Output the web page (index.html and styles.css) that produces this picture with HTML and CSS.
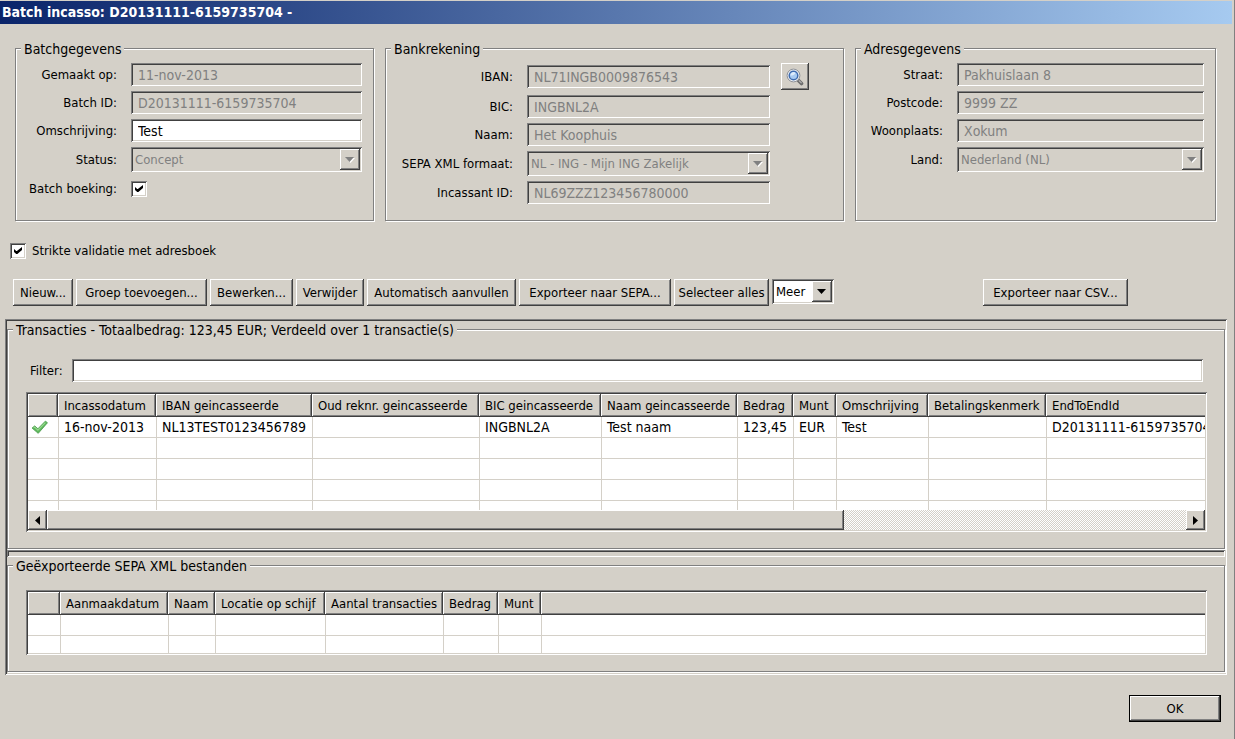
FILE: index.html
```html
<!DOCTYPE html>
<html lang="nl">
<head>
<meta charset="utf-8">
<title>Batch incasso</title>
<link rel="stylesheet" href="styles.css">
</head>
<body>
<div class="window">
  <h1 class="titlebar">Batch incasso: D20131111-6159735704 -</h1>
  <main class="content">
    <div class="groups">
      <fieldset class="group">
        <legend>Batchgegevens</legend>
        <div class="form form-batch">
          <label for="made">Gemaakt op:</label>
          <input class="field" id="made" type="text" value="11-nov-2013" disabled>
          <label for="batchid">Batch ID:</label>
          <input class="field" id="batchid" type="text" value="D20131111-6159735704" disabled>
          <label for="descr">Omschrijving:</label>
          <input class="field" id="descr" type="text" value="Test">
          <label for="status">Status:</label>
          <span class="combo"><select id="status" disabled><option>Concept</option></select><span class="drop"><svg viewBox="0 0 10 6"><path class="arrow-light" d="M1 1h9L5.500 6z"/><path d="M0 0h9L4.500 5z"/></svg></span></span>
          <label for="booking">Batch boeking:</label>
          <input class="check" id="booking" type="checkbox" checked>
        </div>
      </fieldset>
      <fieldset class="group">
        <legend>Bankrekening</legend>
        <div class="form form-bank">
          <label for="iban">IBAN:</label>
          <input class="field" id="iban" type="text" value="NL71INGB0009876543" disabled>
          <button class="button icon-button" type="button" aria-label="Zoeken">
            <svg viewBox="0 0 18 18"><path d="M12 12l3.500 3.500" stroke="#6c6c6c" stroke-width="3.600" stroke-linecap="round"/><path d="M12.800 12.300l2.800 2.800" stroke="#b4b4b4" stroke-width="1.200"/><circle cx="7.500" cy="7.500" r="6.400" fill="#f2f3f4" stroke="#8e9299" stroke-width="1"/><circle cx="7.500" cy="7.500" r="4.300" fill="#a9cbf2" stroke="#3f6cb0" stroke-width="1.500"/><path d="M4.500 7.500a3 3 0 0 1 5-2.600C8.500 7 6.500 7.600 4.500 7.500z" fill="#deecfc"/></svg>
          </button>
          <label for="bic">BIC:</label>
          <input class="field" id="bic" type="text" value="INGBNL2A" disabled>
          <label for="name">Naam:</label>
          <input class="field" id="name" type="text" value="Het Koophuis" disabled>
          <label for="format">SEPA XML formaat:</label>
          <span class="combo"><select id="format" disabled><option>NL - ING - Mijn ING Zakelijk</option></select><span class="drop"><svg viewBox="0 0 10 6"><path class="arrow-light" d="M1 1h9L5.500 6z"/><path d="M0 0h9L4.500 5z"/></svg></span></span>
          <label for="creditor">Incassant ID:</label>
          <input class="field" id="creditor" type="text" value="NL69ZZZ123456780000" disabled>
        </div>
      </fieldset>
      <fieldset class="group">
        <legend>Adresgegevens</legend>
        <div class="form form-address">
          <label for="street">Straat:</label>
          <input class="field" id="street" type="text" value="Pakhuislaan 8" disabled>
          <label for="zip">Postcode:</label>
          <input class="field" id="zip" type="text" value="9999 ZZ" disabled>
          <label for="city">Woonplaats:</label>
          <input class="field" id="city" type="text" value="Xokum" disabled>
          <label for="country">Land:</label>
          <span class="combo"><select id="country" disabled><option>Nederland (NL)</option></select><span class="drop"><svg viewBox="0 0 10 6"><path class="arrow-light" d="M1 1h9L5.500 6z"/><path d="M0 0h9L4.500 5z"/></svg></span></span>
        </div>
      </fieldset>
    </div>

    <div class="strict">
      <input class="check" id="strict" type="checkbox" checked>
      <label for="strict">Strikte validatie met adresboek</label>
    </div>

    <div class="toolbar">
      <button class="button" type="button">Nieuw...</button>
      <button class="button" type="button">Groep toevoegen...</button>
      <button class="button" type="button">Bewerken...</button>
      <button class="button" type="button">Verwijder</button>
      <button class="button" type="button">Automatisch aanvullen</button>
      <button class="button" type="button">Exporteer naar SEPA...</button>
      <button class="button" type="button">Selecteer alles</button>
      <span class="combo"><select aria-label="Meer"><option>Meer</option></select><span class="drop"><svg viewBox="0 0 10 6"><path d="M0 0h9L4.500 5z"/></svg></span></span>
      <button class="button export-csv" type="button">Exporteer naar CSV...</button>
    </div>

    <div class="panes">
      <fieldset class="group pane pane-transactions">
        <legend>Transacties - Totaalbedrag: 123,45 EUR; Verdeeld over 1 transactie(s)</legend>
        <div class="filter">
          <label for="filter">Filter:</label>
          <input class="field" id="filter" type="text">
        </div>
        <div class="grid-box">
          <div class="viewport">
            <table>
              <colgroup><col class="w30"><col class="w98"><col class="w156"><col class="w167"><col class="w122"><col class="w136"><col class="w56"><col class="w43"><col class="w92"><col class="w118"><col></colgroup>
              <thead>
                <tr><th></th><th>Incassodatum</th><th>IBAN geincasseerde</th><th>Oud reknr. geincasseerde</th><th>BIC geincasseerde</th><th>Naam geincasseerde</th><th>Bedrag</th><th>Munt</th><th>Omschrijving</th><th>Betalingskenmerk</th><th>EndToEndId</th></tr>
              </thead>
              <tbody>
                <tr><td class="state"><svg viewBox="0 0 16 16" role="img" aria-label="Geldig"><path d="M1 8.500L3.500 6.500l3 2.700L13.500 2l2 1.500L6.800 13.500z" fill="#5cb85a" stroke="#4a9c4c" stroke-width=".8" stroke-linejoin="round"/><path d="M2.500 8.300l1-.7 3 2.900L13.500 3.500" fill="none" stroke="#98d890" stroke-width="1"/></svg></td><td>16-nov-2013</td><td>NL13TEST0123456789</td><td></td><td>INGBNL2A</td><td>Test naam</td><td>123,45</td><td>EUR</td><td>Test</td><td></td><td>D20131111-6159735704</td></tr>
                <tr><td></td><td></td><td></td><td></td><td></td><td></td><td></td><td></td><td></td><td></td><td></td></tr>
                <tr><td></td><td></td><td></td><td></td><td></td><td></td><td></td><td></td><td></td><td></td><td></td></tr>
                <tr><td></td><td></td><td></td><td></td><td></td><td></td><td></td><td></td><td></td><td></td><td></td></tr>
                <tr><td></td><td></td><td></td><td></td><td></td><td></td><td></td><td></td><td></td><td></td><td></td></tr>
              </tbody>
            </table>
          </div>
          <div class="scrollbar">
            <button class="scroll-button" type="button" aria-label="Naar links"><svg viewBox="0 0 5 9"><path d="M5 0v9L0 4.500z"/></svg></button>
            <div class="track"><div class="thumb"></div></div>
            <button class="scroll-button" type="button" aria-label="Naar rechts"><svg viewBox="0 0 5 9"><path d="M0 0v9l5-4.500z"/></svg></button>
          </div>
        </div>
      </fieldset>
      <div class="sash"></div>
      <fieldset class="group pane pane-exports">
        <legend>Geëxporteerde SEPA XML bestanden</legend>
        <div class="grid-box">
          <div class="viewport viewport-short">
            <table>
              <colgroup><col class="w32"><col class="w108"><col class="w47"><col class="w110"><col class="w118"><col class="w55"><col class="w43"><col></colgroup>
              <thead>
                <tr><th></th><th>Aanmaakdatum</th><th>Naam</th><th>Locatie op schijf</th><th>Aantal transacties</th><th>Bedrag</th><th>Munt</th><th></th></tr>
              </thead>
              <tbody>
                <tr><td></td><td></td><td></td><td></td><td></td><td></td><td></td><td></td></tr>
                <tr><td></td><td></td><td></td><td></td><td></td><td></td><td></td><td></td></tr>
              </tbody>
            </table>
          </div>
        </div>
      </fieldset>
    </div>

    <div class="actions">
      <button class="button ok" type="button">OK</button>
    </div>
  </main>
</div>
</body>
</html>
```
FILE: styles.css
```css
:root {
  --face: #d4d0c8;
  --shade: #808080;
  --dark: #404040;
  --sunken: inset 1px 1px #808080, inset -1px -1px #fff, inset 2px 2px #404040, inset -2px -2px #d4d0c8;
  --raised: inset -1px -1px #404040, inset 1px 1px #fff, inset -2px -2px #808080;
}

* { box-sizing: border-box; }

body {
  margin: 0;
  background: var(--face);
  color: #000;
  font: 13px/17px "DejaVu Sans Condensed", "DejaVu Sans", sans-serif;
}

input, select, button { font: inherit; color: inherit; }

.window {
  min-height: 100vh;
  padding: 1px 1px 0 0;
  border-right: 1px solid var(--shade);
}

.titlebar {
  margin: 0 1px 0 0;
  padding: 3px 2px;
  background: linear-gradient(90deg, #0a246a, #a6caf0);
  color: #fff;
  font-size: 14px;
  line-height: 17px;
  font-weight: bold;
}

.content { padding: 16px 6px 17px 5px; }

.groups {
  display: grid;
  grid-template-columns: 359fr 459fr 361fr;
  gap: 11px;
  padding: 0 11px 0 10px;
}

.group {
  min-width: 0;
  margin: 0;
  padding: 6px 11px 16px 5px;
  border: 1px solid var(--shade);
  box-shadow: inset 1px 1px #fff, 1px 1px #fff;
}

legend {
  padding: 2px 3px 0;
  background: var(--face);
  font-size: 14px;
  line-height: 15px;
}

.form {
  display: grid;
  gap: 5px 14px;
  grid-auto-rows: minmax(23px, auto);
  align-items: center;
}
.form label { text-align: right; white-space: nowrap; }
.form-batch { grid-template-columns: 96px 1fr; }
.form-bank { grid-template-columns: 122px 1fr 48px; }
.form-bank label { grid-column: 1; }
.form-address { grid-template-columns: 82px 1fr; }

.field {
  width: 100%;
  height: 23px;
  min-width: 0;
  margin: 0;
  padding: 2px 7px;
  border: 0;
  border-radius: 0;
  outline: 0;
  background: #fff;
  box-shadow: var(--sunken);
  font-size: 14px;
}
.field:disabled { background: var(--face); color: var(--shade); }

.combo { position: relative; display: block; height: 25px; }
.combo select {
  appearance: none;
  width: 100%;
  height: 25px;
  padding: 2px 4px;
  border: 0;
  border-radius: 0;
  background: #fff;
  box-shadow: var(--sunken);
}
.combo select:disabled { background: var(--face); color: var(--shade); opacity: 1; }
.drop {
  position: absolute;
  top: 2px;
  right: 2px;
  bottom: 2px;
  width: 20px;
  display: grid;
  place-items: center;
  background: var(--face);
  box-shadow: var(--raised);
  pointer-events: none;
}
.drop svg { width: 10px; height: 6px; }
select:disabled + .drop { fill: var(--shade); }
.arrow-light { fill: #fff; }

.check {
  appearance: none;
  display: grid;
  place-items: center;
  width: 16px;
  height: 16px;
  margin: 0;
  background: #fff;
  box-shadow: var(--sunken);
}
.check:checked::before {
  content: "";
  width: 8px;
  height: 7px;
  background: #000;
  clip-path: polygon(0 28%, 0 71%, 28% 100%, 42% 100%, 100% 43%, 100% 0, 36% 57%, 28% 57%);
}

.button {
  height: 27px;
  padding: 0 4px;
  border: 0;
  border-radius: 0;
  background: var(--face);
  box-shadow: var(--raised);
  white-space: nowrap;
}
.icon-button {
  display: grid;
  place-items: center;
  width: 28px;
  margin-left: -3px;
  padding: 0;
}
.icon-button svg { width: 18px; height: 18px; fill: none; }

.strict {
  display: flex;
  align-items: center;
  gap: 6px;
  margin-top: 21px;
  padding-left: 5px;
}

.toolbar {
  display: grid;
  grid-template-columns: 60px 131px 83px 68px 149px 152px 95px 62px 1fr;
  gap: 3px;
  margin: 20px 0 13px;
  padding: 0 99px 0 8px;
}
.export-csv { justify-self: end; width: 145px; }

.panes { padding: 2px 2px 3px; box-shadow: var(--sunken); }
.pane { padding: 21px 17px 16px 18px; }
.pane legend { margin-left: -13px; }
.pane-exports { padding-top: 16px; }
.sash { height: 7px; margin-top: 1px; box-shadow: var(--sunken); }

.filter {
  display: flex;
  align-items: center;
  gap: 9px;
  margin-bottom: 10px;
  padding: 0 4px;
}

.grid-box { padding: 2px; background: #fff; box-shadow: var(--sunken); }
.viewport { height: 116px; overflow: hidden; }
.viewport-short { height: 61px; }

table { width: 100%; table-layout: fixed; border-collapse: separate; border-spacing: 0; }
th, td { padding: 0; text-align: left; font-weight: normal; white-space: nowrap; overflow: hidden; }
th { height: 23px; padding-left: 6px; background: var(--face); box-shadow: var(--raised); }
th:last-child { box-shadow: inset 0 -1px #404040, inset 1px 1px #fff, inset 0 -2px #808080; }
td {
  height: 21px;
  padding-left: 5px;
  border-bottom: 1px solid var(--face);
  border-left: 1px solid var(--face);
  font-size: 14px;
}
td:first-child { border-left: 0; }
td.state { padding-left: 3px; }
.state svg { display: block; width: 17px; height: 17px; }

.w30 { width: 30px; }
.w32 { width: 32px; }
.w43 { width: 43px; }
.w47 { width: 47px; }
.w55 { width: 55px; }
.w56 { width: 56px; }
.w92 { width: 92px; }
.w98 { width: 98px; }
.w108 { width: 108px; }
.w110 { width: 110px; }
.w118 { width: 118px; }
.w122 { width: 122px; }
.w136 { width: 136px; }
.w156 { width: 156px; }
.w167 { width: 167px; }

.scrollbar { display: grid; grid-template-columns: 19px 1fr 19px; height: 20px; }
.scroll-button {
  display: grid;
  place-items: center;
  padding: 0;
  border: 0;
  background: var(--face);
  box-shadow: var(--raised);
}
.scroll-button svg { width: 5px; height: 9px; }
.track { background: repeating-conic-gradient(#fff 0 25%, #d4d0c8 0 50%) 0 0 / 2px 2px; }
.thumb { width: 70%; height: 100%; background: var(--face); box-shadow: var(--raised); }

.actions { display: flex; justify-content: flex-end; margin-top: 20px; padding-right: 6px; }
.ok {
  width: 92px;
  border: 1px solid #000;
}
```
